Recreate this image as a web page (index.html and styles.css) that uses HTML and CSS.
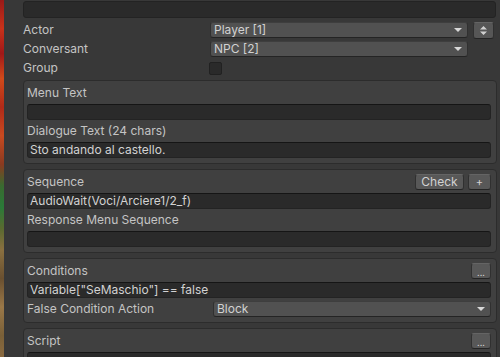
FILE: index.html
```html
<!DOCTYPE html>
<html>
<head>
<meta charset="utf-8">
<link rel="stylesheet" href="styles.css">
</head>
<body>
<div class="window">
  <div class="strip"></div>
  <div class="main">
    <div class="field top-field"></div>
    <div class="row">
      <span class="label label-wide">Actor</span>
      <div class="dropdown dd-fixed"><span>Player [1]</span><i class="arrow"></i></div>
      <button class="btn swap-btn"><svg width="7" height="9" viewBox="0 0 7 9"><path d="M3.5 0 L7 3.5 L0 3.5 Z M0 5.5 L7 5.5 L3.5 9 Z" fill="#d0d0d0"/></svg></button>
    </div>
    <div class="row">
      <span class="label label-wide">Conversant</span>
      <div class="dropdown dd-fixed"><span>NPC [2]</span><i class="arrow"></i></div>
    </div>
    <div class="row">
      <span class="label label-wide">Group</span>
      <span class="checkbox"></span>
    </div>

    <div class="section">
      <div class="label line">Menu Text</div>
      <div class="field"></div>
      <div class="label line">Dialogue Text (24 chars)</div>
      <div class="field"><span>Sto andando al castello.</span></div>
    </div>

    <div class="section">
      <div class="head">
        <span class="label">Sequence</span>
        <button class="btn check-btn">Check</button>
        <button class="btn plus-btn">+</button>
      </div>
      <div class="field"><span>AudioWait(Voci/Arciere1/2_f)</span></div>
      <div class="label line">Response Menu Sequence</div>
      <div class="field"></div>
    </div>

    <div class="section">
      <div class="head">
        <span class="label">Conditions</span>
        <button class="btn dots-btn">...</button>
      </div>
      <div class="field"><span>Variable["SeMaschio"] == false</span></div>
      <div class="head">
        <span class="label label-mid">False Condition Action</span>
        <div class="dropdown dd-grow"><span>Block</span><i class="arrow"></i></div>
      </div>
    </div>

    <div class="section">
      <div class="head">
        <span class="label">Script</span>
        <button class="btn dots-btn">...</button>
      </div>
      <div class="field"></div>
    </div>
  </div>
</div>
</body>
</html>
```

FILE: styles.css
```css
* { box-sizing: border-box; }
html, body {
  margin: 0;
  padding: 0;
  width: 500px;
  height: 357px;
  overflow: hidden;
  background: #383838;
}
body {
  font-family: Inter, "Noto Sans", sans-serif;
  font-size: 12px;
  color: #c4c4c4;
}
.window {
  display: flex;
  height: 357px;
  overflow: hidden;
}
.strip {
  width: 4px;
  flex: 0 0 4px;
  background: linear-gradient(to bottom,
    #9a1a18 0%, #c8321a 8%, #a01818 15%, #d04a1a 22%, #b02a18 30%,
    #c84a20 38%, #8a3a20 46%, #3a6a30 52%, #2a7a38 58%, #5a6a30 64%,
    #8a7040 70%, #6a5030 78%, #9a7848 86%, #7a6038 94%, #8a6a40 100%);
}
.main {
  flex: 1;
  padding: 1px 3px 0 19px;
  display: flex;
  flex-direction: column;
}
.main > *, .section > * { flex-shrink: 0; }
.field {
  height: 16px;
  background: #2a2a2a;
  border: 1px solid #232323;
  border-top-color: #151515;
  border-radius: 3px;
  color: #d2d2d2;
  padding: 0 2px;
  line-height: 14px;
  white-space: nowrap;
  overflow: hidden;
}
.top-field {
  height: 17px;
  margin-bottom: 3px;
  width: 473px;
  border-top-color: #232323;
}
.row {
  height: 18px;
  display: flex;
  align-items: center;
  margin-bottom: 1px;
}
.label {
  color: #c4c4c4;
  line-height: 16px;
  white-space: nowrap;
}
.label-wide { flex: 0 0 187px; }
.label-mid { flex: 0 0 186px; }
.dropdown {
  height: 16px;
  background: #515151;
  border: 1px solid #303030;
  border-bottom-color: #242424;
  border-top-color: #3e3e3e;
  border-radius: 3px;
  color: #d2d2d2;
  display: flex;
  align-items: center;
  padding: 0 4px 0 3px;
  line-height: 14px;
}
.dropdown span { flex: 1; }
.dd-fixed { width: 258px; }
.dd-grow { flex: 1; }
.arrow {
  width: 0;
  height: 0;
  border-left: 4px solid transparent;
  border-right: 4px solid transparent;
  border-top: 4px solid #d8d8d8;
  margin-right: 1px;
}
.btn {
  font-family: Inter, "Noto Sans", sans-serif;
  font-size: 12px;
  color: #d2d2d2;
  background: #585858;
  border: 1px solid #303030;
  border-top-color: #646464;
  border-bottom-color: #242424;
  border-radius: 3px;
  height: 16px;
  padding: 0;
  line-height: 14px;
  display: flex;
  align-items: center;
  justify-content: center;
}
.swap-btn {
  margin-left: 5px;
  width: 21px;
  height: 17px;
  background: #565656;
}
.checkbox {
  width: 13px;
  height: 13px;
  margin-left: -1px;
  background: #2a2a2a;
  border: 1px solid #212121;
  border-radius: 2px;
}
.section {
  width: 474px;
  background: #404040;
  border: 1px solid #2c2c2c;
  border-radius: 4px;
  padding: 4px 5px 5px 3px;
  margin-top: 2px;
  margin-bottom: 3px;
  display: flex;
  flex-direction: column;
}
.section + .section { margin-top: 2px; }
.section .field { margin-top: 3px; }
.section .line { margin-top: 3px; height: 16px; }
.section > .line:first-child { margin-top: 0; }
.head {
  height: 16px;
  display: flex;
  align-items: center;
}
.section .field + .head { margin-top: 3px; }
.head .label { flex: 1; }
.head .label-mid { flex: 0 0 186px; }
.check-btn { width: 49px; margin-right: 4px; }
.plus-btn { width: 23px; font-size: 11px; }
.dots-btn {
  width: 20px;
  font-size: 9px;
  letter-spacing: 0;
  align-items: flex-end;
  padding-bottom: 1px;
  line-height: 9px;
}
```
